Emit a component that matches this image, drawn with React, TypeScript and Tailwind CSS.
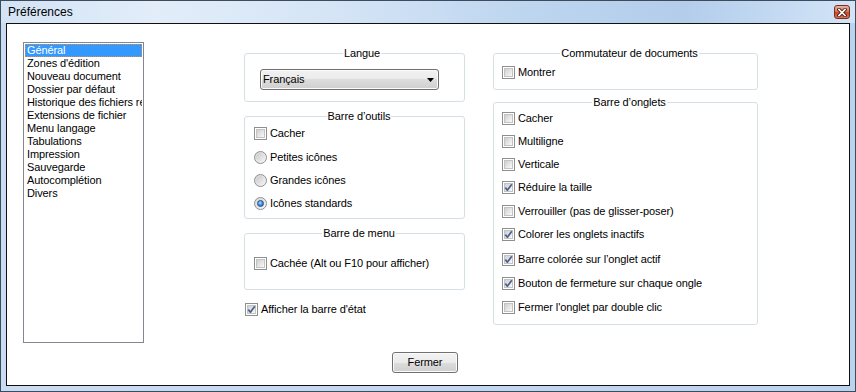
import React from "react";

function Checkbox({ checked }: { checked?: boolean }) {
  return (
    <span className="relative flex h-[13px] w-[13px] shrink-0 items-center justify-center border border-[#8e8f8f] bg-white">
      <span className="h-[9px] w-[9px] border border-[#c3c3c3] bg-[linear-gradient(135deg,#cfcfcf_0%,#e6e6e6_55%,#fafafa_100%)]" />
      {checked && (
        <svg className="absolute left-[0px] top-[0px]" width="11" height="11" viewBox="0 0 11 11">
          <path d="M2.3 5.6 L4.4 8.2 L8.8 2.2" fill="none" stroke="#4a5f92" strokeWidth="1.7" strokeLinejoin="round" />
        </svg>
      )}
    </span>
  );
}

function Radio({ checked }: { checked?: boolean }) {
  return (
    <span className="flex h-[13px] w-[13px] shrink-0 items-center justify-center rounded-full border border-[#8e8f8f] bg-[linear-gradient(135deg,#d6d6d6,#f7f7f7)]">
      {checked ? (
        <span className="h-[7px] w-[7px] rounded-full border border-[#1d4e8c] bg-[radial-gradient(circle_at_40%_35%,#b9dcff_0%,#4b97e4_45%,#1b5fb3_100%)]" />
      ) : (
        <span className="h-[9px] w-[9px] rounded-full bg-[linear-gradient(135deg,#c9c9c9,#f5f5f5)]" />
      )}
    </span>
  );
}

function CheckRow({ label, checked, className = "" }: { label: string; checked?: boolean; className?: string }) {
  return (
    <div className={"flex h-[13px] items-center gap-[3px] whitespace-nowrap " + className}>
      <Checkbox checked={checked} />
      <span className="leading-[13px]">{label}</span>
    </div>
  );
}

function RadioRow({ label, checked, className = "" }: { label: string; checked?: boolean; className?: string }) {
  return (
    <div className={"flex h-[13px] items-center gap-[3px] whitespace-nowrap " + className}>
      <Radio checked={checked} />
      <span className="leading-[13px]">{label}</span>
    </div>
  );
}

function Legend({ children }: { children: React.ReactNode }) {
  return <legend className="mx-auto px-[1px] leading-[13px]">{children}</legend>;
}

const listItems = [
  "Général",
  "Zones d'édition",
  "Nouveau document",
  "Dossier par défaut",
  "Historique des fichiers récents",
  "Extensions de fichier",
  "Menu langage",
  "Tabulations",
  "Impression",
  "Sauvegarde",
  "Autocomplétion",
  "Divers",
];

const tabRows: { label: string; checked: boolean; mt: string }[] = [
  { label: "Cacher", checked: false, mt: "mt-0" },
  { label: "Multiligne", checked: false, mt: "mt-[10px]" },
  { label: "Verticale", checked: false, mt: "mt-[10px]" },
  { label: "Réduire la taille", checked: true, mt: "mt-[10px]" },
  { label: "Verrouiller (pas de glisser-poser)", checked: false, mt: "mt-[11px]" },
  { label: "Colorer les onglets inactifs", checked: true, mt: "mt-[10px]" },
  { label: "Barre colorée sur l’onglet actif", checked: true, mt: "mt-[12px]" },
  { label: "Bouton de fermeture sur chaque ongle", checked: true, mt: "mt-[11px]" },
  { label: "Fermer l'onglet par double clic", checked: false, mt: "mt-[11px]" },
];

export default function App() {
  return (
    <div className="flex h-[392px] w-[856px] flex-col border border-[#3d4b5d] bg-[linear-gradient(to_right,#c9dcf2_0%,#c2d7ef_50%,#bcd3ee_100%)] font-['Liberation_Sans',Arial,sans-serif] text-[11px] leading-[13px] tracking-[-0.1px] text-black">
      {/* title bar */}
      <div className="flex h-[22px] shrink-0 items-center justify-between bg-[linear-gradient(to_right,#d2e3f5_0%,#e2edf9_18%,#d4e4f6_40%,#bdd5ef_62%,#b3cdeb_80%,#c6dbf3_92%,#d2e4f7_100%)] pl-[7px] pr-[5px]">
        <span className="text-[12px] leading-[14px] tracking-normal">Préférences</span>
        <div className="flex h-[14px] w-[16px] items-center justify-center rounded-[3px] border border-[#7b2f1f] bg-[linear-gradient(to_bottom,#eab3a3_0%,#dc7a60_45%,#c9482b_55%,#d8745a_100%)]">
          <svg width="10" height="9" viewBox="0 0 10 9">
            <path d="M2 1.5 L8 7.5 M8 1.5 L2 7.5" stroke="#4a1c12" strokeWidth="3.4" strokeLinecap="square" />
            <path d="M2 1.5 L8 7.5 M8 1.5 L2 7.5" stroke="#ffffff" strokeWidth="1.7" strokeLinecap="square" />
          </svg>
        </div>
      </div>

      {/* client area */}
      <div className="mx-[5px] mb-[5px] flex flex-1 flex-col border border-[#101010] bg-white">
        <div className="flex items-start pl-[16px] pt-[18px]">
          {/* list box */}
          <div className="h-[301px] w-[121px] shrink-0 overflow-hidden border border-[#828790] p-[1px]">
            {listItems.map((item, i) => (
              <div
                key={item}
                className={
                  i === 0
                    ? "h-[13px] overflow-hidden whitespace-nowrap bg-[#3399ff] pl-[2px] leading-[13px] text-white outline-1 -outline-offset-1 outline-dotted outline-[#d98d4a]"
                    : "h-[13px] overflow-hidden whitespace-nowrap pl-[2px] leading-[13px]"
                }
              >
                {item}
              </div>
            ))}
          </div>

          {/* middle column */}
          <div className="ml-[100px] flex w-[221px] shrink-0 flex-col">
            <fieldset className="mt-[5px] h-[55px] rounded-[3px] border border-[#d5dfe5] pl-[15px] pt-[9px]">
              <Legend>Langue</Legend>
              <div className="flex h-[21px] w-[179px] items-center justify-between rounded-[3px] border border-[#707070] bg-[linear-gradient(to_bottom,#f2f2f2_0%,#ebebeb_50%,#dddddd_50%,#cfcfcf_100%)] pl-[2px] pr-[4px] shadow-[inset_0_0_0_1px_#fbfbfb]">
                <span>Français</span>
                <svg width="7" height="4" viewBox="0 0 7 4">
                  <path d="M0 0 H7 L3.5 4 Z" fill="#000" />
                </svg>
              </div>
            </fieldset>

            <fieldset className="mt-[8px] h-[109px] rounded-[3px] border border-[#d5dfe5] pl-[9px] pt-[4px]">
              <Legend>Barre d’outils</Legend>
              <div className="flex flex-col">
                <CheckRow label="Cacher" />
                <RadioRow label="Petites icônes" className="mt-[11px]" />
                <RadioRow label="Grandes icônes" className="mt-[10px]" />
                <RadioRow label="Icônes standards" checked className="mt-[10px]" />
              </div>
            </fieldset>

            <fieldset className="mt-[8px] h-[63px] rounded-[3px] border border-[#d5dfe5] pl-[9px] pt-[17px]">
              <Legend>Barre de menu</Legend>
              <CheckRow label="Cachée (Alt ou F10 pour afficher)" />
            </fieldset>

            <CheckRow label="Afficher la barre d'état" checked className="ml-[1px] mt-[13px]" />
          </div>

          {/* right column */}
          <div className="ml-[28px] flex w-[265px] shrink-0 flex-col">
            <fieldset className="mt-[5px] h-[43px] rounded-[3px] border border-[#d5dfe5] pl-[8px] pt-[6px]">
              <Legend>Commutateur de documents</Legend>
              <CheckRow label="Montrer" />
            </fieldset>

            <fieldset className="mt-[6px] h-[229px] rounded-[3px] border border-[#d5dfe5] pl-[8px] pt-[3px]">
              <Legend>Barre d’onglets</Legend>
              <div className="flex flex-col">
                {tabRows.map((r) => (
                  <CheckRow key={r.label} label={r.label} checked={r.checked} className={r.mt} />
                ))}
              </div>
            </fieldset>
          </div>
        </div>

        <div className="mt-[9px] flex justify-center pr-[6px]">
          <button className="flex h-[21px] w-[66px] items-center justify-center rounded-[3px] border border-[#707070] bg-[linear-gradient(to_bottom,#f2f2f2_0%,#ebebeb_50%,#dddddd_50%,#cfcfcf_100%)] text-[11px] shadow-[inset_0_0_0_1px_#fbfbfb]">
            Fermer
          </button>
        </div>
      </div>
    </div>
  );
}
